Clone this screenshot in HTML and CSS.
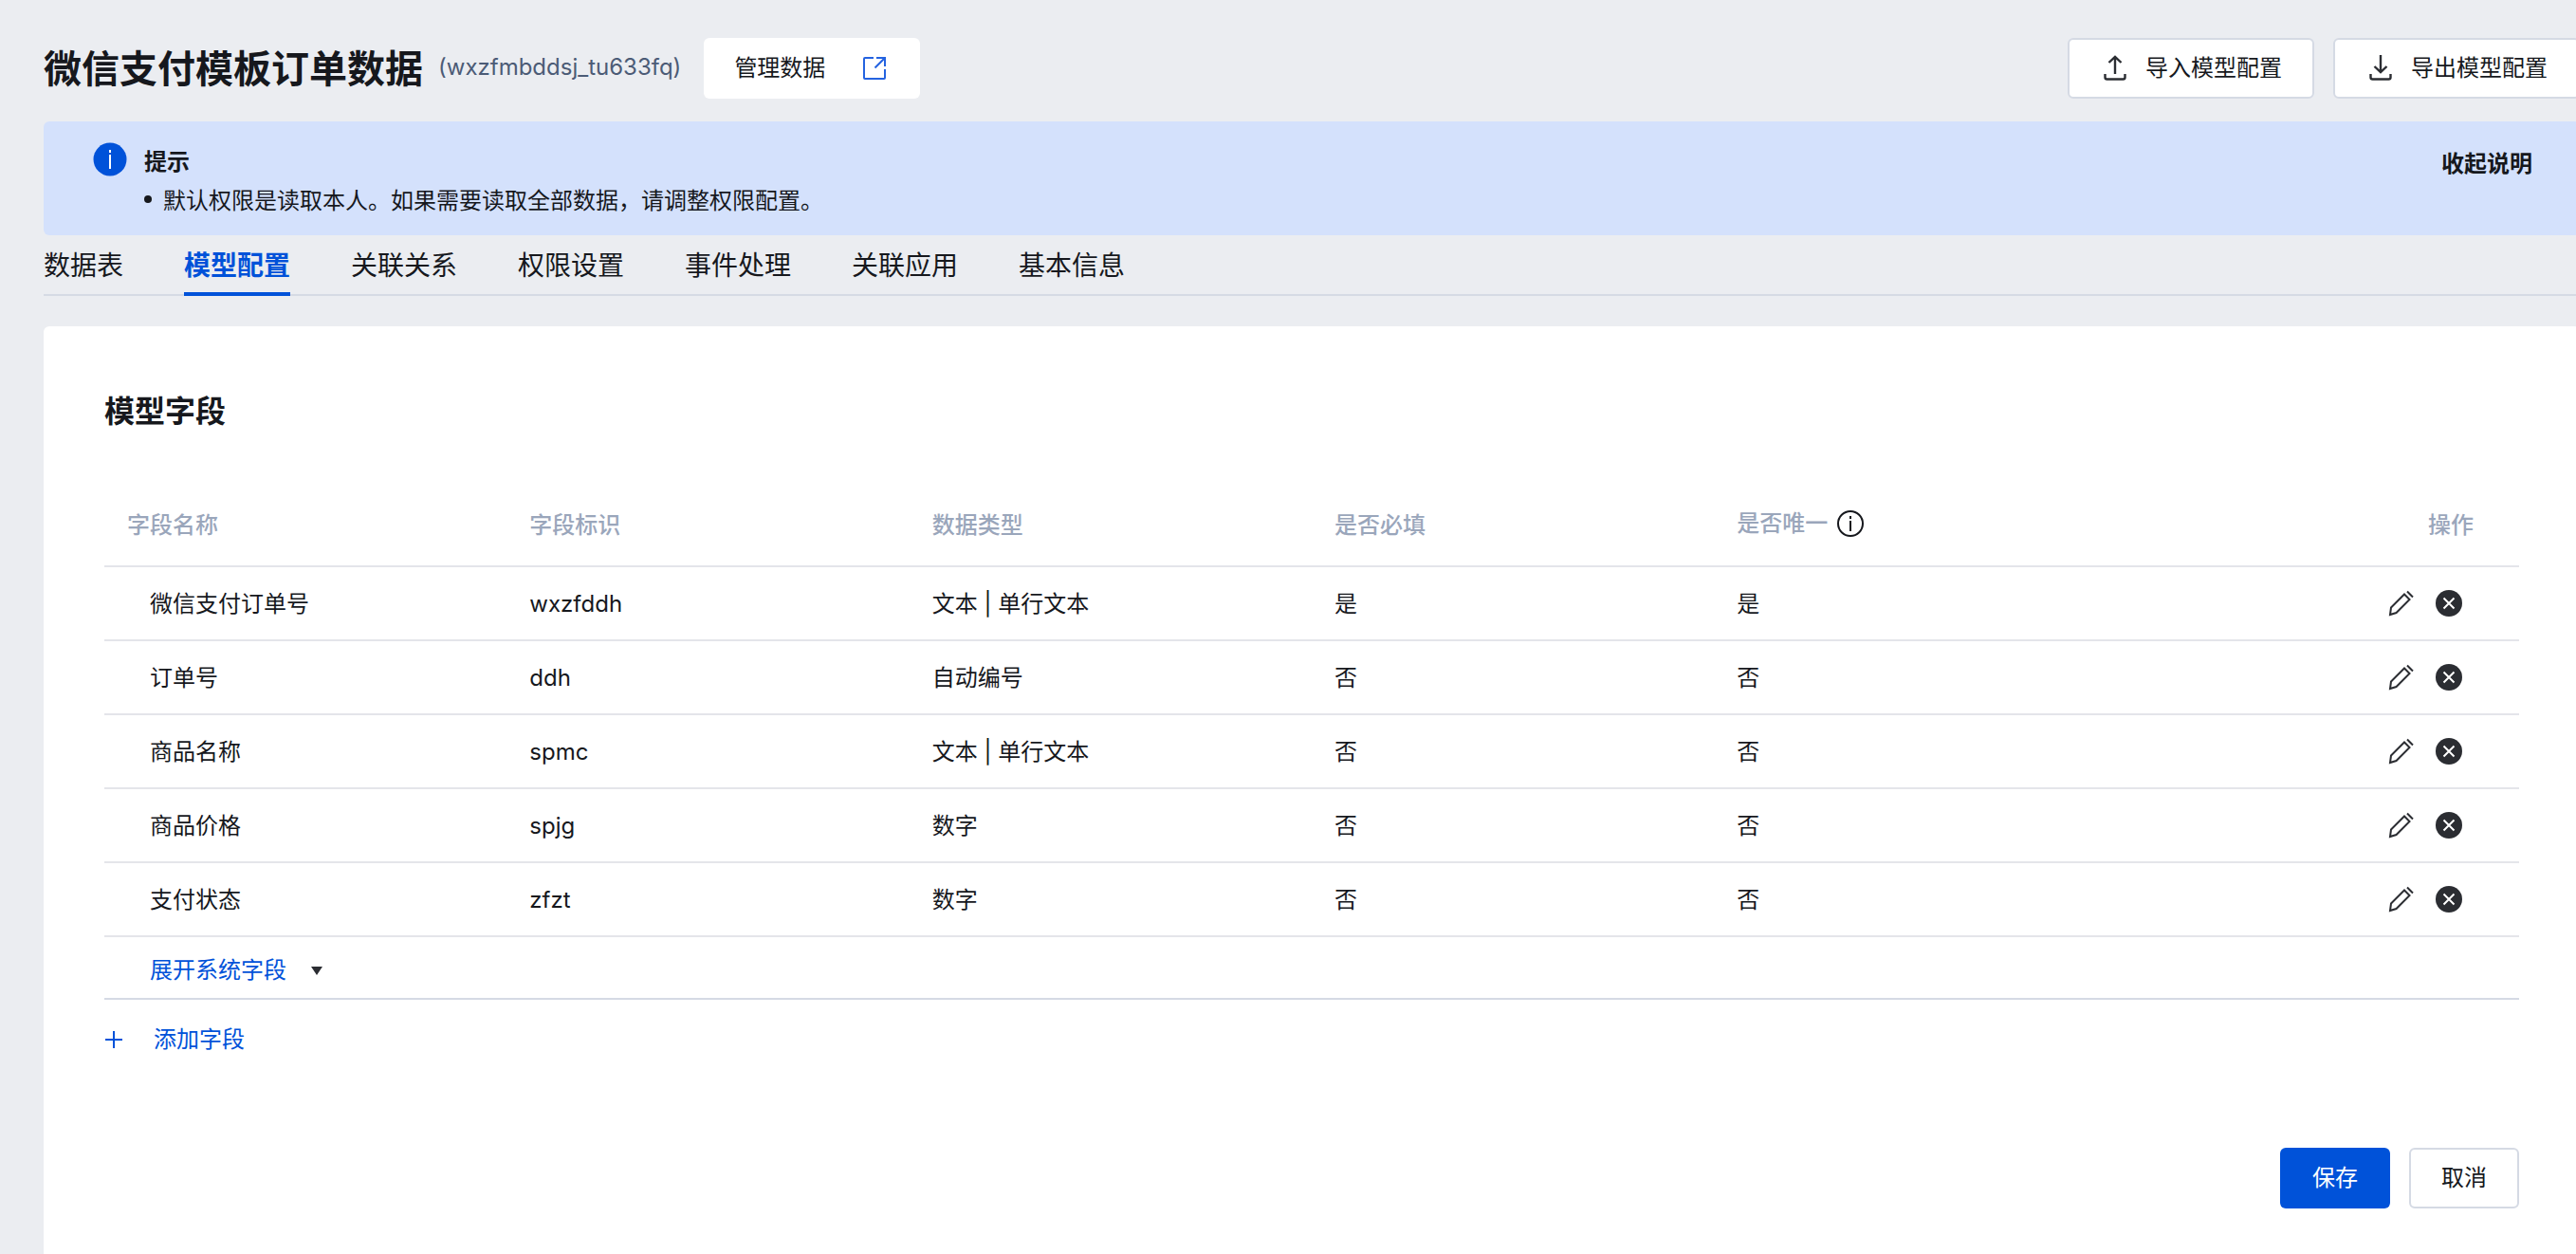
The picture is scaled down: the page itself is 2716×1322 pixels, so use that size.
FILE: index.html
```html
<!DOCTYPE html>
<html lang="zh-CN">
<head>
    <meta charset="UTF-8">
    <meta name="viewport" content="width=device-width, initial-scale=1.0">
    <title>微信支付模板订单数据</title>
    <link rel="stylesheet" href="styles.css">
</head>
<body>
    <!-- Shared icons -->
    <svg class="sprite" aria-hidden="true">
        <symbol id="icon-edit" viewBox="0 0 28 28">
            <path d="M2 26 L3 18.5 L17 4.5 L22.5 10 L8.5 24 Z M20 1.5 L26 7.5" fill="none" stroke="currentColor" stroke-width="2"/>
        </symbol>
        <symbol id="icon-delete" viewBox="0 0 28 28">
            <circle cx="14" cy="14" r="14" fill="currentColor"/>
            <path d="M8.5 8.5 L19.5 19.5 M19.5 8.5 L8.5 19.5" stroke="#fff" stroke-width="2"/>
        </symbol>
    </svg>

    <div class="page">
        <header class="header">
            <h1>微信支付模板订单数据</h1>
            <span class="model-id">(wxzfmbddsj_tu633fq)</span>
            <button class="btn manage">
                管理数据
                <svg class="icon-link" viewBox="0 0 24 24" fill="none" stroke="#2463e0" stroke-width="2">
                    <path d="M11 1 H2 Q1 1 1 2 V22 Q1 23 2 23 H22 Q23 23 23 22 V13 M14 1 H23 V10 M23 1 L12.5 11.5"/>
                </svg>
            </button>
            <div class="header-actions">
                <button class="btn outline">
                    <svg class="icon-io" viewBox="0 0 24 28" fill="none" stroke="currentColor" stroke-width="2.4">
                        <path d="M12 20 V2 M5.5 8 L12 1.8 L18.5 8 M1.5 20 V23.5 Q1.5 25.5 3.5 25.5 H20.5 Q22.5 25.5 22.5 23.5 V20"/>
                    </svg>
                    导入模型配置
                </button>
                <button class="btn outline">
                    <svg class="icon-io" viewBox="0 0 24 28" fill="none" stroke="currentColor" stroke-width="2.4">
                        <path d="M12 0 V18 M5.5 12 L12 18.2 L18.5 12 M1.5 20 V23.5 Q1.5 25.5 3.5 25.5 H20.5 Q22.5 25.5 22.5 23.5 V20"/>
                    </svg>
                    导出模型配置
                </button>
            </div>
        </header>

        <div class="notice">
            <svg class="icon-notice" viewBox="0 0 36 36">
                <circle cx="18" cy="18" r="17.5" fill="#0052d9"/>
                <path d="M18 13 V28 M18 8 V11" stroke="#fff" stroke-width="2"/>
            </svg>
            <div class="notice-body">
                <strong>提示</strong>
                <ul>
                    <li>默认权限是读取本人。如果需要读取全部数据，请调整权限配置。</li>
                </ul>
            </div>
            <button class="collapse">收起说明</button>
        </div>

        <nav class="tabs">
            <a href="#">数据表</a>
            <a href="#" class="active">模型配置</a>
            <a href="#">关联关系</a>
            <a href="#">权限设置</a>
            <a href="#">事件处理</a>
            <a href="#">关联应用</a>
            <a href="#">基本信息</a>
        </nav>

        <main class="panel">
            <h2>模型字段</h2>
            <table class="fields">
                <thead>
                    <tr>
                        <th>字段名称</th>
                        <th>字段标识</th>
                        <th>数据类型</th>
                        <th>是否必填</th>
                        <th>
                            <span class="with-icon">
                                是否唯一
                                <svg class="icon-info" viewBox="0 0 28 28" fill="none" stroke="#16181d" stroke-width="2">
                                    <circle cx="14" cy="14" r="13"/>
                                    <path d="M14 11 V22 M14 6 V9"/>
                                </svg>
                            </span>
                        </th>
                        <th class="action">操作</th>
                    </tr>
                </thead>
                <tbody>
                    <tr>
                        <td>微信支付订单号</td>
                        <td>wxzfddh</td>
                        <td>文本 | 单行文本</td>
                        <td>是</td>
                        <td>是</td>
                        <td class="action">
                            <div class="row-actions">
                                <button aria-label="编辑"><svg><use href="#icon-edit"/></svg></button>
                                <button aria-label="删除"><svg><use href="#icon-delete"/></svg></button>
                            </div>
                        </td>
                    </tr>
                    <tr>
                        <td>订单号</td>
                        <td>ddh</td>
                        <td>自动编号</td>
                        <td>否</td>
                        <td>否</td>
                        <td class="action">
                            <div class="row-actions">
                                <button aria-label="编辑"><svg><use href="#icon-edit"/></svg></button>
                                <button aria-label="删除"><svg><use href="#icon-delete"/></svg></button>
                            </div>
                        </td>
                    </tr>
                    <tr>
                        <td>商品名称</td>
                        <td>spmc</td>
                        <td>文本 | 单行文本</td>
                        <td>否</td>
                        <td>否</td>
                        <td class="action">
                            <div class="row-actions">
                                <button aria-label="编辑"><svg><use href="#icon-edit"/></svg></button>
                                <button aria-label="删除"><svg><use href="#icon-delete"/></svg></button>
                            </div>
                        </td>
                    </tr>
                    <tr>
                        <td>商品价格</td>
                        <td>spjg</td>
                        <td>数字</td>
                        <td>否</td>
                        <td>否</td>
                        <td class="action">
                            <div class="row-actions">
                                <button aria-label="编辑"><svg><use href="#icon-edit"/></svg></button>
                                <button aria-label="删除"><svg><use href="#icon-delete"/></svg></button>
                            </div>
                        </td>
                    </tr>
                    <tr>
                        <td>支付状态</td>
                        <td>zfzt</td>
                        <td>数字</td>
                        <td>否</td>
                        <td>否</td>
                        <td class="action">
                            <div class="row-actions">
                                <button aria-label="编辑"><svg><use href="#icon-edit"/></svg></button>
                                <button aria-label="删除"><svg><use href="#icon-delete"/></svg></button>
                            </div>
                        </td>
                    </tr>
                </tbody>
            </table>

            <div class="expand-row">
                <button class="text-btn expand">
                    展开系统字段
                    <svg class="icon-caret" viewBox="0 0 12 9"><path d="M0 0 H12 L6 9 Z" fill="#2b2d32"/></svg>
                </button>
            </div>
            <button class="text-btn add">
                <svg class="icon-plus" viewBox="0 0 20 20"><path d="M10 1 V19 M1 10 H19" stroke="currentColor" stroke-width="2"/></svg>
                添加字段
            </button>

            <div class="footer">
                <button class="btn primary">保存</button>
                <button class="btn outline">取消</button>
            </div>
        </main>
    </div>
</body>
</html>
```

FILE: styles.css
```css
* {
    box-sizing: border-box;
}
body {
    margin: 0;
    min-height: 100vh;
    overflow: hidden;
    display: flex;
    background-color: #ebedf1;
    color: #16181d;
    font-family: Inter, "Noto Sans CJK SC", sans-serif;
    font-size: 24px;
    line-height: 36px;
}
button {
    padding: 0;
    border: none;
    background: none;
    color: inherit;
    font: inherit;
    cursor: pointer;
}
svg {
    display: block;
    flex: none;
}
.sprite {
    display: none;
}
.page {
    flex: 1;
    display: flex;
    flex-direction: column;
    /* content runs slightly past the window edge */
    margin: 0 -4px 0 46px;
}
.header {
    display: flex;
    align-items: center;
    padding: 40px 0 24px;
}
h1 {
    margin: 0;
    padding-top: 2px;
    font-size: 40px;
    line-height: 60px;
}
.model-id {
    margin: 0 24px 0 16px;
    padding-bottom: 2px;
    color: #4b5b76;
}
.header-actions {
    display: flex;
    gap: 20px;
    margin-left: auto;
}
.btn {
    display: flex;
    align-items: center;
    height: 64px;
    padding: 0 32px;
    border-radius: 6px;
    background-color: #fff;
}
.outline {
    border: 2px solid #d5dae4;
}
.manage {
    gap: 40px;
    padding-right: 36px;
}
.primary {
    padding: 0 34px;
    background-color: #0052d9;
    color: #fff;
}
.header-actions .btn {
    padding: 0 32px 0 36px;
    gap: 20px;
}
.icon-link {
    width: 24px;
    height: 24px;
}
.icon-io {
    width: 24px;
    height: 28px;
    color: #2b2d32;
}
.notice {
    display: flex;
    align-items: flex-start;
    min-height: 120px;
    padding: 22px 50px 16px 52px;
    border-radius: 6px;
    background-color: #d4e1fc;
}
.icon-notice {
    width: 36px;
    height: 36px;
    margin-right: 18px;
}
.notice-body strong {
    display: block;
    line-height: 42px;
}
.notice-body ul {
    margin: 0;
    padding: 0;
    list-style: none;
}
.notice-body li {
    display: flex;
    align-items: center;
    gap: 12px;
    line-height: 40px;
}
.notice-body li::before {
    content: "";
    width: 8px;
    height: 8px;
    margin-bottom: 4px;
    border-radius: 50%;
    background-color: #16181d;
}
.collapse {
    margin-left: auto;
    font-weight: bold;
    line-height: 46px;
}
.tabs {
    display: flex;
    gap: 64px;
    height: 64px;
    border-bottom: 2px solid #d5dae4;
    font-size: 28px;
    line-height: 64px;
}
.tabs a {
    height: 64px;
    color: inherit;
    text-decoration: none;
}
.tabs .active {
    border-bottom: 4px solid #0052d9;
    color: #0052d9;
    font-weight: bold;
}
.panel {
    flex: 1;
    margin-top: 32px;
    padding: 64px;
    border-radius: 6px 6px 0 0;
    background-color: #fff;
}
h2 {
    margin: 0;
    font-size: 32px;
    line-height: 52px;
}
.fields {
    width: 100%;
    margin-top: 50px;
    border-collapse: separate;
    border-spacing: 0;
    table-layout: fixed;
}
.fields th,
.fields td {
    height: 78px;
    padding: 2px 24px 0;
    border-bottom: 2px solid #e4e5ea;
    text-align: left;
}
.fields th {
    height: 88px;
    color: #9aa6bb;
    font-weight: 500;
}
.fields td:first-child {
    padding-left: 48px;
}
.fields .action {
    padding-right: 48px;
    text-align: right;
}
.fields td.action {
    padding-top: 0;
    padding-right: 60px;
}
.with-icon {
    display: flex;
    align-items: center;
    gap: 10px;
    padding-bottom: 4px;
}
.icon-info {
    width: 28px;
    height: 28px;
}
.row-actions {
    display: flex;
    justify-content: flex-end;
    gap: 22px;
    color: #2b2d32;
}
.row-actions svg {
    width: 28px;
    height: 28px;
}
.expand-row {
    padding: 17px 48px 11px;
    border-bottom: 2px solid #d5dae4;
}
.text-btn {
    display: flex;
    align-items: center;
    color: #0052d9;
}
.expand {
    gap: 26px;
}
.icon-caret {
    width: 12px;
    height: 9px;
}
.add {
    gap: 32px;
    margin-top: 24px;
}
.icon-plus {
    width: 20px;
    height: 20px;
}
.footer {
    display: flex;
    justify-content: flex-end;
    gap: 20px;
    margin-top: 96px;
}
```
